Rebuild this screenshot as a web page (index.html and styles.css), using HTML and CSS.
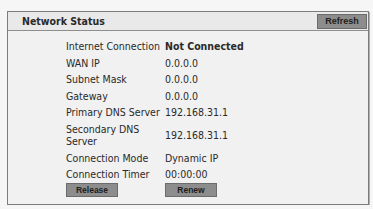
FILE: index.html
```html
<!DOCTYPE html>
<html lang="en">
<head>
    <meta charset="UTF-8">
    <title>Network Status</title>
    <meta name="viewport" content="width=device-width, initial-scale=1.0">
    <link rel="stylesheet" href="styles.css">
</head>
<body>

<div class="panel">
    <div class="panel-head">
        <h2>Network Status</h2>
        <button class="btn btn-refresh">Refresh</button>
    </div>

    <table class="status">
        <tr><td>Internet Connection</td><td class="strong">Not Connected</td></tr>
        <tr><td>WAN IP</td><td>0.0.0.0</td></tr>
        <tr><td>Subnet Mask</td><td>0.0.0.0</td></tr>
        <tr><td>Gateway</td><td>0.0.0.0</td></tr>
        <tr><td>Primary DNS Server</td><td>192.168.31.1</td></tr>
        <tr><td>Secondary DNS Server</td><td>192.168.31.1</td></tr>
        <tr><td>Connection Mode</td><td>Dynamic IP</td></tr>
        <tr><td>Connection Timer</td><td>00:00:00</td></tr>
        <tr class="actions">
            <td><button class="btn">Release</button></td>
            <td><button class="btn">Renew</button></td>
        </tr>
    </table>
</div>

</body>
</html>
```

FILE: styles.css
```css
* { box-sizing: border-box; }
:root {
    --border-color: #7c7c7c;
    --text-color: #2a2a2a;
}
body {
    margin: 0px;
    background-color: #f6f6f6;
    font-family: "DejaVu Sans Condensed", "DejaVu Sans", Verdana, sans-serif;
    color: var(--text-color);
}

.panel {
    margin: 11px 0 0 7px;
    width: 362px;
    height: 194px;
    background-color: #f1f1f1;
    border: 1px solid var(--border-color);
    box-shadow: 1px 1px 0 #b0b0b0;
}

.panel-head {
    height: 19px;
    display: flex;
    align-items: center;
    justify-content: space-between;
    padding: 0 1px 0 14px;
    background-color: #e9e9e9;
    border-bottom: 1px solid #8e8e8e;
}
.panel-head h2 {
    margin: 0px;
    font-size: 10.5px;
    font-weight: bold;
}

.btn {
    width: 52px;
    height: 14px;
    padding: 0;
    font-family: "Liberation Sans", Arial, sans-serif;
    font-size: 8.5px;
    font-weight: bold;
    color: #1e1e1e;
    background-color: #8d8d8d;
    border: 1px solid #6c6c6c;
    border-radius: 0;
}
.btn-refresh {
    width: 50px;
    height: 15px;
    font-size: 9px;
}

.status {
    margin: 7px 0 0 56px;
    border-spacing: 0;
    font-size: 10.5px;
}
.status td {
    padding: 2px 2px;
    line-height: 12.5px;
    vertical-align: middle;
}
.status td:first-child { width: 99px; }
.status .strong { font-weight: bold; }
.status .actions td { padding-top: 0; }
.status .actions .btn { display: block; }
```
